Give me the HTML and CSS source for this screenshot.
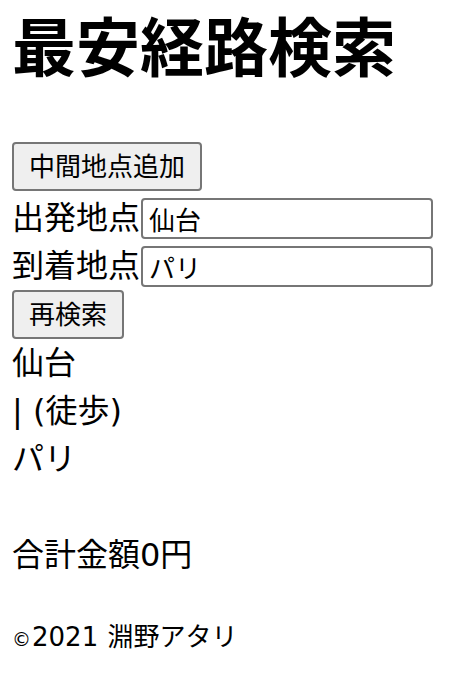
FILE: index.html
```html
<!DOCTYPE html>
<html lang="ja">
<head>
<meta charset="utf-8">
<title>最安経路検索</title>
<link rel="stylesheet" href="styles.css">
</head>
<body>
<h1 class="title">最安経路検索</h1>
<div class="actions">
  <button class="btn" type="button">中間地点追加</button>
</div>
<div class="field">
  <label class="field-label">出発地点</label><input class="field-input" type="text" value="仙台">
</div>
<div class="field">
  <label class="field-label">到着地点</label><input class="field-input" type="text" value="パリ">
</div>
<div class="actions">
  <button class="btn" type="button">再検索</button>
</div>
<div class="route">
  <div class="route-line">仙台</div>
  <div class="route-line">| (徒歩)</div>
  <div class="route-line">パリ</div>
</div>
<p class="total">合計金額0円</p>
<footer class="footer"><span class="copy">©</span>2021 淵野アタリ</footer>
</body>
</html>
```
FILE: styles.css
```css
html, body {
  background: #ffffff;
}
body {
  margin: 0 12px;
  font-family: "DejaVu Sans", "Noto Sans CJK JP", sans-serif;
  font-size: 32px;
  line-height: 48px;
  color: #000000;
}
.title {
  margin: 0 0 44px;
  font-size: 64px;
  line-height: 98px;
  font-weight: bold;
}
.actions {
  display: flex;
  height: 49px;
}
.actions + .field {
  margin-top: 3px;
}
.btn {
  height: 49px;
  padding: 0 15px;
  font-family: "DejaVu Sans", "Noto Sans CJK JP", sans-serif;
  font-size: 26px;
  line-height: 1;
  color: #000000;
  background: #efefef;
  border: 2px solid #767676;
  border-radius: 4px;
}
.field {
  display: flex;
  align-items: center;
  height: 48px;
}
.field-label {
  white-space: nowrap;
}
.field-input {
  box-sizing: border-box;
  width: 292px;
  height: 41px;
  margin: 0 0 0 1px;
  padding: 0 6px;
  font-family: "DejaVu Sans", "Noto Sans CJK JP", sans-serif;
  font-size: 26px;
  color: #000000;
  background: #ffffff;
  border: 2px solid #767676;
  border-radius: 4px;
}
.route-line {
  height: 48px;
}
.total {
  margin: 48px 0 0;
}
.footer {
  margin-top: 39px;
  font-size: 26px;
  line-height: 38px;
  word-spacing: 1px;
}
.copy {
  font-size: 19px;
  margin-right: 1px;
}
```
